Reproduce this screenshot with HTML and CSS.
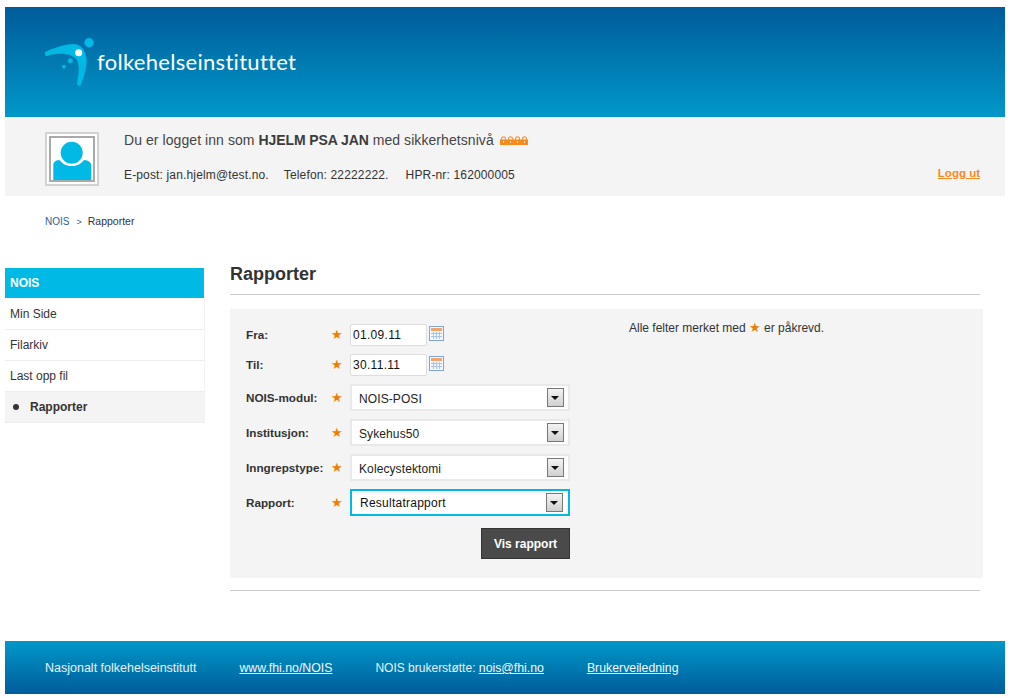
FILE: index.html
```
<!DOCTYPE html>
<html lang="no">
<head>
<meta charset="utf-8">
<title>NOIS Rapporter</title>
<link rel="stylesheet" href="styles.css">
</head>
<body>
<div class="page">
  <header class="top">
    <svg class="logo-mark" width="52" height="50" viewBox="0 0 52 50">
      <path fill="#00b9e4" d="M0 15C9 11 20 7 28 7C37 7 42 15 41.500 26C41 34 38 42 36 47.500C35 49.500 32 49 32 46.500C33.500 38 35 30 32 23C27 16 13 15 2 19C-.5 19 -1 16 0 15Z"/>
      <circle cx="44" cy="5.700" r="4.700" fill="#00b9e4"/>
      <circle cx="33.700" cy="15.700" r="3.500" fill="#fff"/>
      <circle cx="25.300" cy="23.700" r="2.500" fill="#00b9e4"/>
      <circle cx="19" cy="29.700" r="1.900" fill="#00b9e4"/>
    </svg>
    <span class="logo-text">folkehelseinstituttet</span>
  </header>

  <section class="info">
    <div class="avatar">
      <div class="avatar-inner">
        <svg width="42" height="42" viewBox="0 0 42 42">
          <circle cx="20.700" cy="14.700" r="11" fill="#00b9e4"/>
          <path fill="#00b9e4" d="M2.300 44V28C2.300 24 4 22.500 8.500 22C12 26.500 16 28 20.700 28C25.500 28 29.500 26.500 33 22C37.500 22.500 40.300 24 40.300 28V44Z"/>
        </svg>
      </div>
    </div>
    <div class="info-text">
      <p class="who">Du er logget inn som <strong>HJELM PSA JAN</strong> med sikkerhetsnivå
        <span class="locks">
          <svg class="lock" width="7" height="9" viewBox="0 0 7 9"><path fill="none" stroke="#f59a3e" stroke-width="1.200" d="M1.500 4V2.500C1.500 .4 5.500 .4 5.500 2.500V4"/><rect y="3.500" width="7" height="5.500" fill="#f58a1f"/><rect x="3" y="5" width="1" height="2" fill="#fde3c4"/></svg>
          <svg class="lock" width="7" height="9" viewBox="0 0 7 9"><path fill="none" stroke="#f59a3e" stroke-width="1.200" d="M1.500 4V2.500C1.500 .4 5.500 .4 5.500 2.500V4"/><rect y="3.500" width="7" height="5.500" fill="#f58a1f"/><rect x="3" y="5" width="1" height="2" fill="#fde3c4"/></svg>
          <svg class="lock" width="7" height="9" viewBox="0 0 7 9"><path fill="none" stroke="#f59a3e" stroke-width="1.200" d="M1.500 4V2.500C1.500 .4 5.500 .4 5.500 2.500V4"/><rect y="3.500" width="7" height="5.500" fill="#f58a1f"/><rect x="3" y="5" width="1" height="2" fill="#fde3c4"/></svg>
          <svg class="lock" width="7" height="9" viewBox="0 0 7 9"><path fill="none" stroke="#f59a3e" stroke-width="1.200" d="M1.500 4V2.500C1.500 .4 5.500 .4 5.500 2.500V4"/><rect y="3.500" width="7" height="5.500" fill="#f58a1f"/><rect x="3" y="5" width="1" height="2" fill="#fde3c4"/></svg>
        </span>
      </p>
      <p class="contact"><span>E-post: jan.hjelm@test.no.</span><span>Telefon: 22222222.</span><span class="hpr">HPR-nr: 162000005</span></p>
    </div>
    <a class="logout" href="#">Logg ut</a>
  </section>

  <nav class="crumbs"><a href="#">NOIS</a><span class="sep">&gt;</span><span>Rapporter</span></nav>

  <div class="columns">
    <aside class="side">
      <div class="side-title">NOIS</div>
      <a class="side-item" href="#">Min Side</a>
      <a class="side-item" href="#">Filarkiv</a>
      <a class="side-item" href="#">Last opp fil</a>
      <a class="side-item current" href="#"><span class="dot"></span>Rapporter</a>
    </aside>

    <main class="main">
      <h1 class="title">Rapporter</h1>
      <form class="panel">
        <div class="fields">
          <div class="row short">
            <label class="lab">Fra:</label><span class="star">★</span>
            <input class="date" value="01.09.11">
            <svg class="cal" width="15" height="15" viewBox="0 0 15 15"><rect x=".5" y=".5" width="14" height="14" fill="#f4f8fd" stroke="#7fa6d6"/><rect x="2" y="2" width="11" height="3" fill="#f6a56a"/><path stroke="#a9c4e6" d="M2 7.500h11M2 10.500h11M4.500 6v7M7.500 6v7M10.500 6v7"/></svg>
          </div>
          <div class="row short">
            <label class="lab">Til:</label><span class="star">★</span>
            <input class="date" value="30.11.11">
            <svg class="cal" width="15" height="15" viewBox="0 0 15 15"><rect x=".5" y=".5" width="14" height="14" fill="#f4f8fd" stroke="#7fa6d6"/><rect x="2" y="2" width="11" height="3" fill="#f6a56a"/><path stroke="#a9c4e6" d="M2 7.500h11M2 10.500h11M4.500 6v7M7.500 6v7M10.500 6v7"/></svg>
          </div>
          <div class="row tall">
            <label class="lab">NOIS-modul:</label><span class="star">★</span>
            <div class="select"><span>NOIS-POSI</span><span class="arrow"></span></div>
          </div>
          <div class="row tall">
            <label class="lab">Institusjon:</label><span class="star">★</span>
            <div class="select"><span>Sykehus50</span><span class="arrow"></span></div>
          </div>
          <div class="row tall">
            <label class="lab">Inngrepstype:</label><span class="star">★</span>
            <div class="select"><span>Kolecystektomi</span><span class="arrow"></span></div>
          </div>
          <div class="row tall">
            <label class="lab">Rapport:</label><span class="star">★</span>
            <div class="select focus"><span>Resultatrapport</span><span class="arrow"></span></div>
          </div>
          <div class="actions"><button class="btn" type="button">Vis rapport</button></div>
        </div>
        <p class="note">Alle felter merket med <span class="star-inline">★</span> er påkrevd.</p>
      </form>
      <div class="rule"></div>
    </main>
  </div>

  <footer class="foot">
    <span class="foot-org">Nasjonalt folkehelseinstitutt</span>
    <a href="#">www.fhi.no/NOIS</a>
    <span>NOIS brukerstøtte: <a href="#">nois@fhi.no</a></span>
    <a href="#">Brukerveiledning</a>
  </footer>
</div>
</body>
</html>
```
FILE: styles.css
```
* { box-sizing: border-box; }
html, body { margin: 0; padding: 0; background: #fff; }
body { font-family: "Liberation Sans", Arial, sans-serif; color: #333; font-size: 12px; }
p { margin: 0; }
.page { width: 1000px; margin: 7px 0 0 5px; }

.top {
  height: 110px;
  background: linear-gradient(#005c9b, #0098c8);
  display: flex;
  align-items: flex-start;
  padding: 30px 0 0 40px;
}
.logo-mark { display: block; flex: none; }
.logo-text {
  font-family: Lato, "Open Sans", sans-serif;
  font-size: 22px;
  font-weight: 400;
  color: #fff;
  margin: 10px 0 0 0;
  line-height: 30px;
  letter-spacing: .3px;
}

.info {
  height: 79px;
  background: #f4f4f4;
  display: flex;
  align-items: flex-start;
  padding: 15px 25px 0 40px;
}
.avatar {
  width: 54px; height: 54px;
  border: 2px solid #d2d2d2;
  background: #fff;
  padding: 2px;
  flex: none;
}
.avatar-inner {
  width: 46px; height: 46px;
  border: 2px solid #aaa;
  background: #fff;
  overflow: hidden;
}
.avatar-inner svg { display: block; }
.info-text { margin-left: 25px; flex: 1; }
.who { font-size: 14px; line-height: 16px; color: #444; letter-spacing: .07px; }
.who strong { color: #3c3c3c; letter-spacing: -.1px; }
.locks { display: inline-flex; margin-left: 2px; vertical-align: 0; }
.lock { display: block; }
.contact { margin-top: 20px; font-size: 12px; line-height: 14px; color: #333; display: flex; gap: 15px; letter-spacing: .15px; }
.hpr { margin-left: 2px; }
.logout { margin-top: 34px; font-size: 11.500px; font-weight: 700; color: #f58a1f; line-height: 14px; }

.crumbs { padding: 19px 0 0 40px; height: 72px; font-size: 10.500px; line-height: 13px; color: #333; }
.crumbs a { color: #1f5f99; text-decoration: none; font-size: 10px; }
.sep { margin: 0 6px 0 7px; color: #1f5f99; font-size: 9px; }

.columns { display: flex; align-items: flex-start; }
.side { width: 200px; flex: none; }
.side-title {
  height: 30px;
  background: #00b9e4;
  color: #fff;
  font-weight: 700;
  font-size: 12px;
  line-height: 30px;
  padding-left: 5px;
  margin: 0 1px 1px 0;
}
.side-item {
  display: flex;
  align-items: center;
  height: 31px;
  padding-left: 5px;
  border-bottom: 1px solid #eee;
  border-right: 1px solid #f2f2f2;
  color: #333;
  text-decoration: none;
  font-size: 12px;
}
.side-item.current { background: #f4f4f4; font-weight: 700; padding-left: 8px; }
.dot { width: 6px; height: 6px; border-radius: 50%; background: #333; margin-right: 11px; }

.main { margin-left: 25px; width: 753px; }
.title { margin: 0 3px 14px 0; height: 27px; font-size: 18px; line-height: 13px; color: #333; border-bottom: 1px solid #ccc; font-weight: 700; }
.panel { background: #f4f4f4; height: 269px; display: flex; padding-left: 16px; }
.fields { width: 324px; display: flex; flex-direction: column; gap: 8px; flex: none; padding-top: 15px; }
.row { display: flex; align-items: center; height: 22px; }
.row.tall { height: 27px; }
.lab { width: 86px; flex: none; font-weight: 700; color: #333; font-size: 11.700px; }
.star { width: 18px; flex: none; color: #f07d00; font-family: "DejaVu Sans", sans-serif; font-size: 13px; margin-left: -1px; margin-right: 1px; }
.row.short .lab, .row.short .star { margin-top: -2px; }
.date {
  width: 77px; height: 22px;
  border: 1px solid #ddd;
  border-radius: 2px;
  background: #fff;
  font: 12px "Liberation Sans", Arial, sans-serif;
  color: #111;
  padding: 0 2px 1px 2px;
  letter-spacing: .3px;
}
.cal { margin: -3px 0 0 2px; }
.select {
  width: 220px; height: 27px;
  border: 2px solid #e9e9e9;
  background: #fff;
  display: flex;
  align-items: center;
  justify-content: space-between;
  padding: 0 4px 0 7px;
  color: #222;
  font-size: 12px;
  letter-spacing: .1px;
}
.select > span:first-child { padding-top: 2px; }
.select.focus { border-color: #00b9e4; color: #111; padding-left: 8px; padding-right: 5px; letter-spacing: .25px; }
.select.focus > span:first-child { padding-top: 0; }
.arrow {
  width: 17px; height: 19px;
  border: 1px solid #777;
  background: linear-gradient(#f4f4f4, #cfcfcf);
  position: relative;
  flex: none;
}
.arrow::after {
  content: "";
  position: absolute;
  left: 3px; top: 7px;
  border-left: 4px solid transparent;
  border-right: 4px solid transparent;
  border-top: 4px solid #111;
}
.actions { display: flex; justify-content: flex-end; margin-top: 4px; }
.btn {
  width: 89px; height: 31px;
  background: #4a4a4a;
  border: 1px solid #333;
  color: #fff;
  font: 700 12px "Liberation Sans", Arial, sans-serif;
  padding: 0;
}
.note { margin: 12px 0 0 59px; font-size: 12px; line-height: 14px; color: #333; }
.star-inline { color: #f07d00; font-family: "DejaVu Sans", sans-serif; font-size: 13px; line-height: 14px; }
.rule { height: 1px; background: #ccc; margin: 12px 3px 0 0; }

.foot {
  margin-top: 50px;
  height: 53px;
  background: linear-gradient(#0098c8, #005c9b);
  display: flex;
  align-items: center;
  gap: 43px;
  padding: 1px 0 0 40px;
  color: #e6f2f8;
  font-size: 12px;
}
.foot-org { font-size: 12.500px; }
.foot a { color: #f2f8fb; text-decoration: underline; font-size: 12.300px; }
```
